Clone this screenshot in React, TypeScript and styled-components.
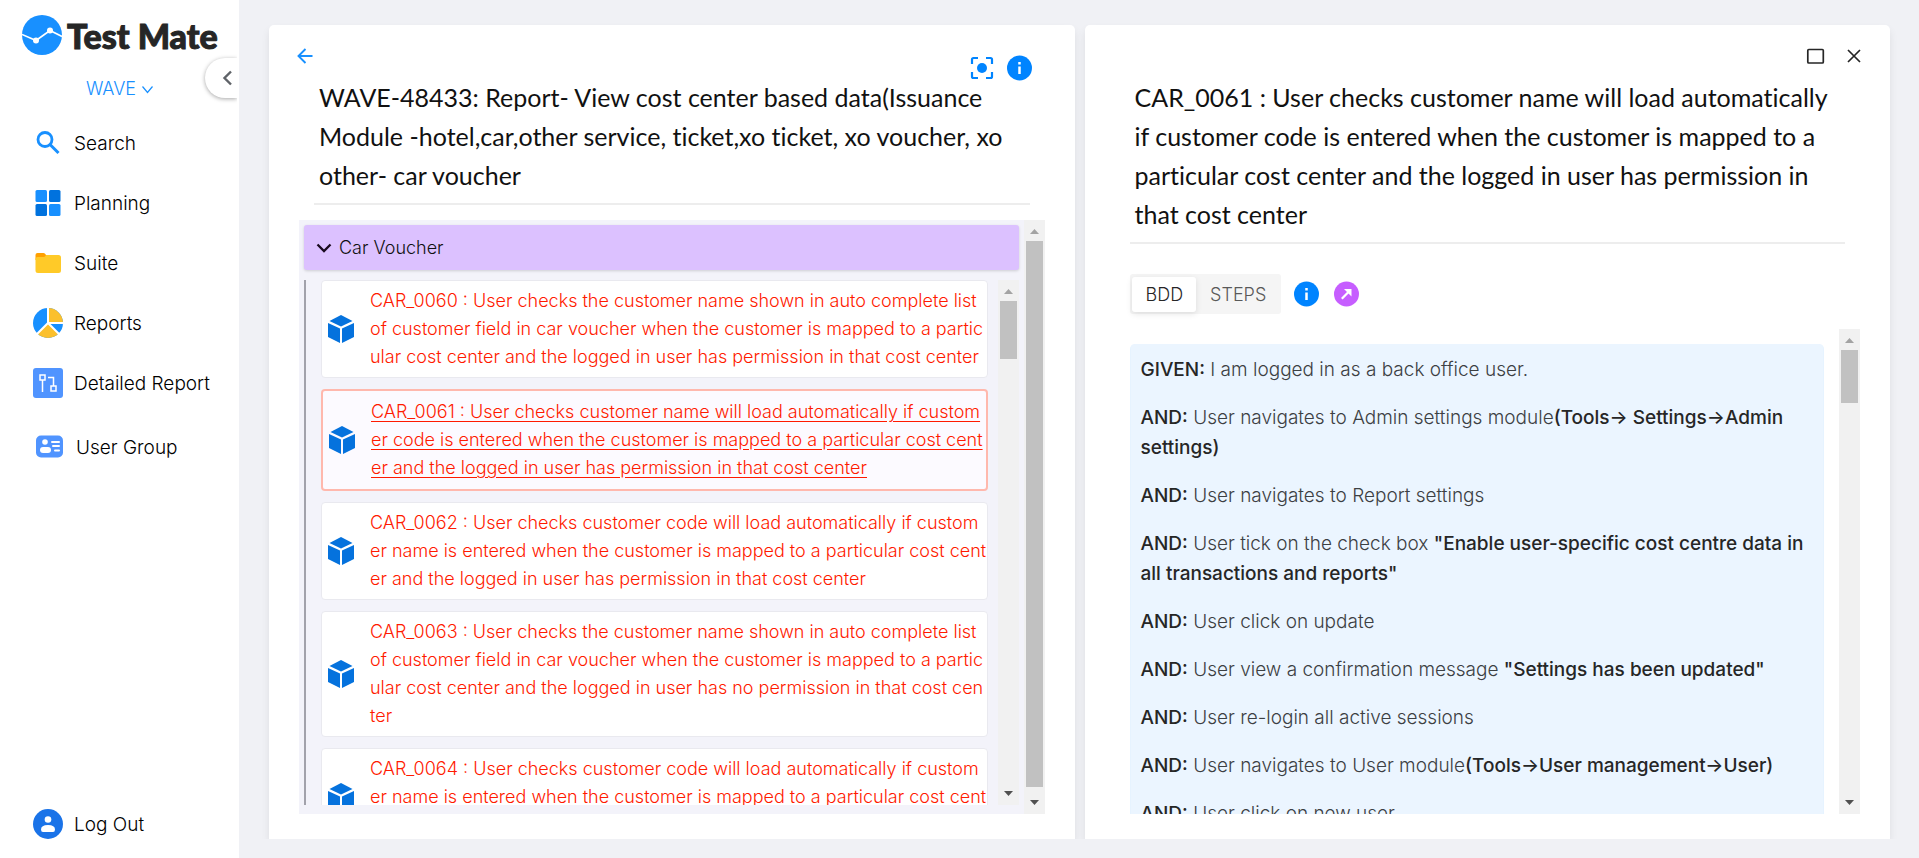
import React, { useState } from "react";
import styled, { createGlobalStyle, css } from "styled-components";

const GlobalStyle = createGlobalStyle`
  *, *::before, *::after { box-sizing: border-box; }
  body {
    margin: 0;
    background: #f0f1f5;
    color: #000;
    font-family: Inter, "Liberation Sans", sans-serif;
    font-size: 18px;
    font-weight: 300;
  }
  button {
    border: 0;
    padding: 0;
    background: none;
    font: inherit;
    color: inherit;
    cursor: pointer;
  }
  svg { display: block; flex: none; }
`;

const Layout = styled.div`
  display: flex;
  height: 100vh;
`;

/* ---------- Sidebar ---------- */

const Sidebar = styled.aside`
  position: relative;
  display: flex;
  flex-direction: column;
  flex: none;
  width: 239px;
  padding: 15px 0 4px;
  background: #fff;
  overflow: hidden;
`;

const Brand = styled.div`
  display: flex;
  align-items: center;
  gap: 5px;
  height: 40px;
  padding-left: 22px;
  color: #262626;
  font-family: Lato, sans-serif;
  font-size: 34px;
  font-weight: 900;
  white-space: nowrap;
  -webkit-text-stroke: 1px #262626;
`;

const ProjectPicker = styled.button`
  display: flex;
  align-items: center;
  align-self: center;
  gap: 6px;
  height: 30px;
  margin: 18px 0 10px;
  color: #1890ff;
`;

const CollapseButton = styled.button`
  position: absolute;
  top: 58px;
  right: 2px;
  display: flex;
  align-items: center;
  width: 32px;
  height: 40px;
  padding-left: 15px;
  border-radius: 20px 0 0 20px;
  background: #fff;
  box-shadow: 0 1px 4px rgba(0, 0, 0, 0.35);
  clip-path: inset(-6px 0 -6px -6px);
`;

const Nav = styled.nav`
  display: flex;
  flex: 1;
  flex-direction: column;
`;

const NavItem = styled.a<{ $tall?: boolean; $last?: boolean }>`
  display: flex;
  align-items: center;
  gap: 11px;
  height: ${(p) => (p.$tall ? 68 : 60)}px;
  margin-top: ${(p) => (p.$last ? "auto" : 0)};
  padding-left: 33px;
  color: #000;
  font-size: 19px;
  text-decoration: none;
  white-space: nowrap;
`;

/* ---------- Panels ---------- */

const Main = styled.main`
  display: flex;
  flex: 1;
  gap: 10px;
  min-width: 0;
  padding: 25px 29px 19px 30px;
`;

const Panel = styled.section`
  display: flex;
  flex: 1 1 0;
  flex-direction: column;
  min-width: 0;
  padding-bottom: 25px;
  border-radius: 5px 5px 0 0;
  background: #fff;
  box-shadow: 0 5px 8px rgba(0, 0, 0, 0.08);
  clip-path: inset(-8px -10px 0 -10px);
`;

const PanelBar = styled.header`
  display: flex;
  align-items: flex-start;
  justify-content: space-between;
  flex: none;
  height: 53px;
  padding: 19px 24px 0;
`;

const BarActions = styled.div<{ $low?: boolean }>`
  display: flex;
  gap: ${(p) => (p.$low ? 12 : 14)}px;
  margin-left: auto;
  padding: ${(p) => (p.$low ? "11px 19px 0 0" : 0)};
`;

const PanelTitle = styled.h1`
  flex: none;
  margin: 0 45px;
  padding: 0 5px 8px;
  border-bottom: 2px solid #ededed;
  color: #111;
  font-family: Lato, sans-serif;
  font-size: 25px;
  font-weight: 400;
  font-variant-ligatures: none;
  line-height: 39px;
`;

/* ---------- Scroll bars ---------- */

const Scroller = styled.div`
  flex: 1;
  min-width: 0;
  overflow-y: auto;
  scrollbar-width: none;
`;

const Track = styled.div`
  display: flex;
  flex: none;
  flex-direction: column;
  align-items: center;
  justify-content: space-between;
  width: 21px;
  background: #f1f1f1;
`;

const TrackBody = styled.div`
  flex: 1;
  width: 17px;
`;

const Thumb = styled.div<{ $size: string }>`
  height: ${(p) => p.$size};
  background: #c1c1c1;
`;

function ScrollBar({ size }: { size: string }) {
  return (
    <Track aria-hidden="true">
      <svg width="21" height="21">
        <path d="M6 14L10.5 9L15 14Z" fill="#a3a3a3" />
      </svg>
      <TrackBody>
        <Thumb $size={size} />
      </TrackBody>
      <svg width="21" height="21">
        <path d="M6 7L10.5 12L15 7Z" fill="#505050" />
      </svg>
    </Track>
  );
}

/* ---------- Test case list ---------- */

const CaseArea = styled.div`
  display: flex;
  flex: 1;
  min-height: 0;
  margin: 15px 30px 0;
  background: #f3f3fa;
`;

const CaseGroup = styled.div`
  display: flex;
  flex: 1;
  flex-direction: column;
  min-width: 0;
  padding: 5px 5px 9px;
`;

const GroupHeader = styled.button`
  display: flex;
  align-items: center;
  flex: none;
  gap: 5px;
  height: 45px;
  margin-bottom: 10px;
  padding-left: 11px;
  border-radius: 3px;
  background: #dcc1ff;
  box-shadow: 0 1px 3px rgba(0, 0, 0, 0.16);
  color: #111;
`;

const GroupBody = styled.div`
  display: flex;
  flex: 1;
  gap: 10px;
  min-height: 0;
  padding-left: 15px;
  border-left: 2px solid #a2a2ab;
`;

const CaseList = styled.div`
  display: flex;
  flex-direction: column;
  gap: 11px;
`;

const CaseCard = styled.button<{ $selected: boolean }>`
  display: flex;
  align-items: center;
  gap: 15px;
  padding: 6px 0 6px 5px;
  border: 1px solid #e9e9ef;
  border-radius: 4px;
  background: #fff;
  color: #ff1a00;
  line-height: 28px;
  text-align: left;
  word-break: break-all;
  ${(p) =>
    p.$selected &&
    css`
      padding: 7px 0 7px 5px;
      border: 2px solid #ffb8ad;
      background: #fcfaff;
      text-decoration: underline;
      text-underline-offset: 3px;
    `}
`;

/* ---------- Steps ---------- */

const Toolbar = styled.div`
  display: flex;
  align-items: center;
  flex: none;
  gap: 15px;
  margin: 30px 45px 15px;
`;

const Segments = styled.div`
  display: flex;
  height: 40px;
  margin-right: -2px;
  padding: 3px 2px 2px;
  border-radius: 3px;
  background: #f5f5f5;
`;

const Segment = styled.label<{ $active: boolean }>`
  position: relative;
  display: flex;
  align-items: center;
  padding: 0 13px 0 14px;
  border-radius: 3px;
  background: ${(p) => (p.$active ? "#fff" : "transparent")};
  box-shadow: ${(p) => (p.$active ? "0 2px 6px rgba(0, 0, 0, 0.1)" : "none")};
  color: ${(p) => (p.$active ? "#262626" : "#595959")};
  cursor: pointer;
`;

const SegmentInput = styled.input`
  position: absolute;
  inset: 0;
  margin: 0;
  opacity: 0;
  cursor: pointer;
`;

const StepsArea = styled.div`
  display: flex;
  flex: 1;
  gap: 15px;
  min-height: 0;
  margin: 0 30px 0 45px;
`;

const StepsBox = styled.div`
  margin-top: 15px;
  padding: 11px 10px;
  border: 1px solid #e6f3ff;
  border-top-width: 0;
  border-radius: 5px;
  background: #ebf5ff;
`;

const Step = styled.p`
  margin: 0 0 18px;
  color: #3c4043;
  font-size: 19px;
  line-height: 30px;
  b {
    color: #262626;
    font-weight: 500;
  }
`;

/* ---------- Icons ---------- */

const LogoMark = () => (
  <svg width="40" height="40" viewBox="0 0 40 40">
    <circle cx="20" cy="20" r="20" fill="#1890ff" />
    <path d="M0 19.500L14 25.500L28 15.500L40 21.500" fill="none" stroke="#fff" strokeWidth="1.600" />
    <circle cx="14" cy="25.500" r="3" fill="#fff" />
    <circle cx="28" cy="15.500" r="3" fill="#fff" />
  </svg>
);

const SearchIcon = () => (
  <svg width="30" height="30" viewBox="0 0 30 30" fill="none" stroke="#1890ff" strokeWidth="2.800">
    <circle cx="12" cy="11.500" r="7" />
    <path d="M17 16.500L25.500 25" strokeWidth="3" />
  </svg>
);

const PlanningIcon = () => (
  <svg width="30" height="30" viewBox="0 0 30 30">
    <rect x="2.500" y="2" width="11.500" height="12" rx="1.500" fill="#1890ff" />
    <rect x="16" y="2" width="11.500" height="12" rx="1.500" fill="#0072de" />
    <rect x="2.500" y="16" width="11.500" height="12" rx="1.500" fill="#0072de" />
    <rect x="16" y="16" width="11.500" height="12" rx="1.500" fill="#1890ff" />
  </svg>
);

const FolderIcon = () => (
  <svg width="30" height="30" viewBox="0 0 30 30">
    <path d="M2.500 12V7Q2.500 5 4.500 5H10.500Q12 5 13 7V10Z" fill="#ffa000" />
    <path d="M2.500 11Q2.500 9 4.500 9H11Q12 9 13 7H25.500Q28 7 28 9.500V22.500Q28 25 25.500 25H5Q2.500 25 2.500 22.500Z" fill="#ffca28" />
  </svg>
);

const PieIcon = () => (
  <svg width="30" height="30" viewBox="0 0 30 30">
    <circle cx="15" cy="15" r="15" fill="#1890ff" />
    <path d="M15 15V0A15 15 0 0 1 30 15Z" fill="#fbc02d" />
    <path d="M15 15L25.600 25.600A15 15 0 0 1 4.400 25.600Z" fill="#fbc02d" />
    <path d="M15 0V15H30M4 26L15 15L26 26" fill="none" stroke="#fff" strokeWidth="2" />
  </svg>
);

const FlowIcon = () => (
  <svg width="30" height="30" viewBox="0 0 30 30">
    <rect width="30" height="30" rx="3" fill="#5094ff" />
    <g fill="none" stroke="#fff" strokeWidth="1.500">
      <rect x="7" y="7" width="5" height="5" />
      <rect x="18" y="18" width="5" height="5" />
      <path d="M9.500 12V24M15 9.500H20.500V18" />
    </g>
  </svg>
);

const UserCardIcon = () => (
  <svg width="32" height="30" viewBox="0 0 32 30">
    <rect x="3" y="3.500" width="27" height="22" rx="5" fill="#5094ff" />
    <g fill="#fff">
      <circle cx="12" cy="10" r="2.800" />
      <rect x="7" y="15" width="11" height="6" rx="3" />
      <rect x="18" y="9" width="9" height="2" rx="1" />
      <rect x="19" y="13" width="8" height="2" rx="1" />
      <rect x="21" y="17.500" width="6" height="2" rx="1" />
    </g>
  </svg>
);

const AccountIcon = () => (
  <svg width="30" height="30" viewBox="0 0 30 30">
    <circle cx="15" cy="15" r="15" fill="#1a73e8" />
    <circle cx="15" cy="10.500" r="3.300" fill="#fff" />
    <path d="M8 20.500Q8 16 15 16Q22 16 22 20.500Q22 23 20 23H10Q8 23 8 20.500Z" fill="#fff" />
  </svg>
);

const ThinChevronDown = () => (
  <svg width="11" height="12" viewBox="0 0 11 12" fill="none" stroke="#1890ff" strokeWidth="1.200">
    <path d="M0.500 4.500L5.500 10.500L10.500 4.500" />
  </svg>
);

const ChevronLeft = () => (
  <svg width="14" height="18" viewBox="0 0 14 18" fill="none" stroke="#5f6368" strokeWidth="2.400">
    <path d="M11 2.500L4.500 9L11 15.500" />
  </svg>
);

const ChevronDown = () => (
  <svg width="19" height="16" viewBox="0 0 19 16" fill="none" stroke="#1a0a1f" strokeWidth="2.300">
    <path d="M2.500 4.500L9 11L15.500 4.500" />
  </svg>
);

const ArrowLeft = () => (
  <svg width="24" height="24" viewBox="0 0 24 24" fill="none" stroke="#1890ff" strokeWidth="1.900">
    <path d="M19.500 12H5.500M12.500 5L5.500 12L12.500 19" />
  </svg>
);

const FocusIcon = () => (
  <svg width="26" height="26" viewBox="0 0 26 26" fill="none" stroke="#0084ff" strokeWidth="2.200">
    <path d="M3 9V4.500Q3 3 4.500 3H9M17 3H21.500Q23 3 23 4.500V9M23 17V21.500Q23 23 21.500 23H17M9 23H4.500Q3 23 3 21.500V17" />
    <circle cx="13" cy="13" r="5" fill="#0084ff" stroke="none" />
  </svg>
);

const InfoIcon = () => (
  <svg width="25" height="26" viewBox="0 0 25 26">
    <circle cx="12.500" cy="13" r="12.500" fill="#0084ff" />
    <path d="M12.500 7V9.500M12.500 11.500V19" stroke="#fff" strokeWidth="2.500" />
  </svg>
);

const OpenIcon = () => (
  <svg width="25" height="26" viewBox="0 0 25 26">
    <circle cx="12.500" cy="13" r="12.500" fill="#c65eff" />
    <path d="M7.800 17.700L15.500 10" stroke="#fff" strokeWidth="2.300" />
    <path d="M10 8H17.500V15.500L15 13L12.500 10.500Z" fill="#fff" />
  </svg>
);

const MaximizeIcon = () => (
  <svg width="24" height="24" viewBox="0 0 24 24" fill="none" stroke="#262626" strokeWidth="1.700">
    <rect x="3.800" y="5.500" width="15.500" height="13.500" rx="1" />
  </svg>
);

const CloseIcon = () => (
  <svg width="24" height="24" viewBox="0 0 24 24" fill="none" stroke="#262626" strokeWidth="1.700">
    <path d="M6 6L18 18M18 6L6 18" />
  </svg>
);

const CubeIcon = () => (
  <svg width="28" height="28" viewBox="0 0 28 28" fill="#0572dd">
    <path d="M14 0L25.500 6L14 11.500L2.500 6Z" />
    <path d="M1 8L13 13.500V28L1 22Z" />
    <path d="M27 8L15 13.500V28L27 22Z" />
  </svg>
);

/* ---------- Data ---------- */

const cases = [
  "CAR_0060 : User checks the customer name shown in auto complete list of customer field in car voucher when the customer is mapped to a particular cost center and the logged in user has permission in that cost center",
  "CAR_0061 : User checks customer name will load automatically if customer code is entered when the customer is mapped to a particular cost center and the logged in user has permission in that cost center",
  "CAR_0062 : User checks customer code will load automatically if customer name is entered when the customer is mapped to a particular cost center and the logged in user has permission in that cost center",
  "CAR_0063 : User checks the customer name shown in auto complete list of customer field in car voucher when the customer is mapped to a particular cost center and the logged in user has no permission in that cost center",
  "CAR_0064 : User checks customer code will load automatically if customer name is entered when the customer is mapped to a particular cost center and the logged in user has no permission in that cost center",
];

const steps = [
  { keyword: "GIVEN:", text: "I am logged in as a back office user." },
  { keyword: "AND:", text: "User navigates to Admin settings module", strong: "(Tools→ Settings→Admin settings)" },
  { keyword: "AND:", text: "User navigates to Report settings" },
  {
    keyword: "AND:",
    text: "User tick on the check box ",
    strong: "\"Enable user-specific cost centre data in all transactions and reports\"",
  },
  { keyword: "AND:", text: "User click on update" },
  { keyword: "AND:", text: "User view a confirmation message ", strong: "\"Settings has been updated\"" },
  { keyword: "AND:", text: "User re-login all active sessions" },
  { keyword: "AND:", text: "User navigates to User module", strong: "(Tools→User management→User)" },
  { keyword: "AND:", text: "User click on new user" },
];

const navItems = [
  { label: "Search", icon: <SearchIcon /> },
  { label: "Planning", icon: <PlanningIcon /> },
  { label: "Suite", icon: <FolderIcon /> },
  { label: "Reports", icon: <PieIcon /> },
  { label: "Detailed Report", icon: <FlowIcon /> },
  { label: "User Group", icon: <UserCardIcon />, tall: true },
];

export default function App() {
  const [selected, setSelected] = useState(1);
  const [view, setView] = useState("BDD");

  return (
    <Layout>
      <GlobalStyle />
      <Sidebar>
        <Brand>
          <LogoMark />
          Test Mate
        </Brand>
        <ProjectPicker type="button">
          WAVE
          <ThinChevronDown />
        </ProjectPicker>
        <CollapseButton type="button" aria-label="Collapse menu">
          <ChevronLeft />
        </CollapseButton>
        <Nav>
          {navItems.map((item) => (
            <NavItem key={item.label} href="#" $tall={item.tall}>
              {item.icon}
              {item.label}
            </NavItem>
          ))}
          <NavItem href="#" $last>
            <AccountIcon />
            Log Out
          </NavItem>
        </Nav>
      </Sidebar>

      <Main>
        <Panel>
          <PanelBar>
            <button type="button" aria-label="Back">
              <ArrowLeft />
            </button>
            <BarActions $low>
              <button type="button" aria-label="Focus">
                <FocusIcon />
              </button>
              <button type="button" aria-label="Information">
                <InfoIcon />
              </button>
            </BarActions>
          </PanelBar>
          <PanelTitle>
            WAVE-48433: Report- View cost center based data(Issuance Module -hotel,car,other service, ticket,xo
            ticket, xo voucher, xo other- car voucher
          </PanelTitle>
          <CaseArea>
            <CaseGroup>
              <GroupHeader type="button" aria-expanded="true">
                <ChevronDown />
                Car Voucher
              </GroupHeader>
              <GroupBody>
                <Scroller>
                  <CaseList>
                    {cases.map((text, i) => (
                      <CaseCard key={text} type="button" $selected={i === selected} onClick={() => setSelected(i)}>
                        <CubeIcon />
                        <span>{text}</span>
                      </CaseCard>
                    ))}
                  </CaseList>
                </Scroller>
                <ScrollBar size="12%" />
              </GroupBody>
            </CaseGroup>
            <ScrollBar size="calc(100% - 6px)" />
          </CaseArea>
        </Panel>

        <Panel>
          <PanelBar>
            <BarActions>
              <button type="button" aria-label="Maximize">
                <MaximizeIcon />
              </button>
              <button type="button" aria-label="Close">
                <CloseIcon />
              </button>
            </BarActions>
          </PanelBar>
          <PanelTitle as="h2">
            CAR_0061 : User checks customer name will load automatically if customer code is entered when the
            customer is mapped to a particular cost center and the logged in user has permission in that cost center
          </PanelTitle>
          <Toolbar>
            <Segments>
              {["BDD", "STEPS"].map((name) => (
                <Segment key={name} $active={view === name}>
                  <SegmentInput
                    type="radio"
                    name="view"
                    value={name}
                    checked={view === name}
                    onChange={() => setView(name)}
                  />
                  {name}
                </Segment>
              ))}
            </Segments>
            <button type="button" aria-label="Information">
              <InfoIcon />
            </button>
            <button type="button" aria-label="Open">
              <OpenIcon />
            </button>
          </Toolbar>
          <StepsArea>
            <Scroller>
              <StepsBox>
                {steps.map((step, i) => (
                  <Step key={i}>
                    <b>{step.keyword}</b> {step.text}
                    {step.strong && <b>{step.strong}</b>}
                  </Step>
                ))}
              </StepsBox>
            </Scroller>
            <ScrollBar size="12%" />
          </StepsArea>
        </Panel>
      </Main>
    </Layout>
  );
}
